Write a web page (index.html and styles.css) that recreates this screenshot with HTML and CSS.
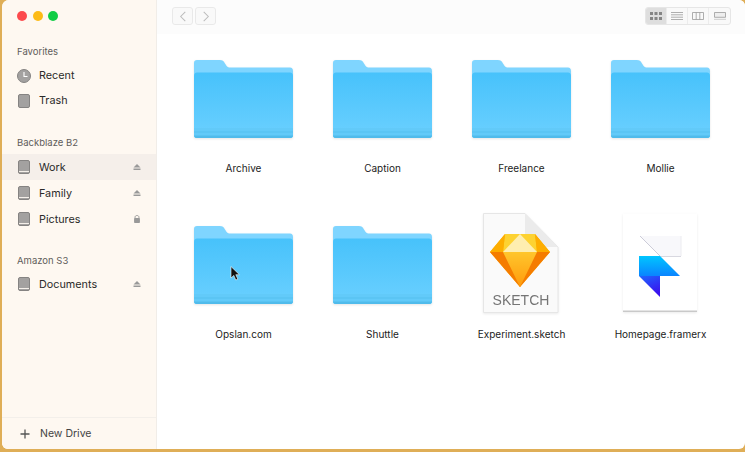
FILE: index.html
```html
<!DOCTYPE html>
<html lang="en">
<head>
  <meta charset="UTF-8">
  <meta name="viewport" content="width=device-width, initial-scale=1.0">
  <title>Drives</title>
  <link rel="stylesheet" href="styles.css">
</head>
<body>
  <!-- Shared icons -->
  <svg class="defs" width="0" height="0">
    <defs>
      <linearGradient id="folder-front" x1="0" y1="0" x2="0" y2="1">
        <stop offset="0" stop-color="#47c2fb"/>
        <stop offset="1" stop-color="#6bd0ff"/>
      </linearGradient>
      <linearGradient id="gem-mid" x1="0" y1="0" x2="0" y2="1">
        <stop offset="0" stop-color="#ffc62c"/>
        <stop offset="1" stop-color="#ff9a0c"/>
      </linearGradient>
      <linearGradient id="fr-top" x1="0" y1="0" x2="0" y2="1">
        <stop offset="0" stop-color="#00c6ff"/>
        <stop offset="1" stop-color="#0a84ff"/>
      </linearGradient>
      <linearGradient id="fr-bottom" x1="0" y1="0" x2="0.4" y2="1">
        <stop offset="0" stop-color="#1f66ff"/>
        <stop offset="1" stop-color="#3a12ee"/>
      </linearGradient>
      <symbol id="folder" viewBox="0 0 100 78" preserveAspectRatio="none">
        <path d="M3 0H26C29 0 30 1 31 3L33 6C34 7 35 7.500 37 7.500H97C99 7.500 100 9 100 11V40H0V3C0 1 1 0 3 0Z" fill="#7fd5ff"/>
        <path d="M3 12.500H97C99 12.500 100 14 100 16V75C100 77 99 78 97 78H3C1 78 0 77 0 75V16C0 14 1 12.500 3 12.500Z" fill="url(#folder-front)"/>
        <path d="M0 68H100V75C100 77 99 78 97 78H3C1 78 0 77 0 75Z" fill="#62caf9"/>
        <path d="M0 71.500H100V72.500H0Z" fill="#55c0f0"/>
        <path d="M0 75.500H100V75C100 77 99 78 97 78H3C1 78 0 77 0 75Z" fill="#50bbeb"/>
      </symbol>
      <symbol id="drive" viewBox="0 0 14 14">
        <rect x="1.500" y="0.500" width="11" height="13" rx="1.500" fill="#a3a1a0" stroke="#858382"/>
        <path d="M2 11H12V12H2Z" fill="#f4efe9"/>
      </symbol>
      <symbol id="eject" viewBox="0 0 8 7">
        <path d="M4 0.500L7.500 4H0.500Z" fill="#999"/>
        <rect x="0.500" y="5" width="7" height="1.500" fill="#999"/>
      </symbol>
    </defs>
  </svg>

  <div class="window">
    <aside class="sidebar">
      <div class="lights">
        <span class="light light-red"></span>
        <span class="light light-yellow"></span>
        <span class="light light-green"></span>
      </div>

      <h2 class="side-title side-title-first">Favorites</h2>
      <ul class="side-list side-list-tight">
        <li class="side-row">
          <svg class="side-icon" viewBox="0 0 14 14">
            <circle cx="7" cy="7" r="6.500" fill="#a3a1a0" stroke="#858382"/>
            <path d="M7 3V7.500H10.500" fill="none" stroke="#fff" stroke-width="1.100"/>
          </svg>
          <span class="side-name">Recent</span>
        </li>
        <li class="side-row">
          <svg class="side-icon" viewBox="0 0 14 14">
            <rect x="1.500" y="0.500" width="11" height="13" rx="1.500" fill="#a3a1a0" stroke="#858382"/>
          </svg>
          <span class="side-name">Trash</span>
        </li>
      </ul>

      <h2 class="side-title">Backblaze B2</h2>
      <ul class="side-list">
        <li class="side-row side-row-active">
          <svg class="side-icon"><use href="#drive"/></svg>
          <span class="side-name">Work</span>
          <svg class="side-state"><use href="#eject"/></svg>
        </li>
        <li class="side-row">
          <svg class="side-icon"><use href="#drive"/></svg>
          <span class="side-name">Family</span>
          <svg class="side-state"><use href="#eject"/></svg>
        </li>
        <li class="side-row">
          <svg class="side-icon"><use href="#drive"/></svg>
          <span class="side-name">Pictures</span>
          <svg class="side-state" viewBox="0.500 0.500 7 8.200">
            <path d="M2 4V2.800C2 0.400 6 0.400 6 2.800V4" fill="none" stroke="#999" stroke-width="1"/>
            <rect x="1" y="3.700" width="6" height="5" rx="0.800" fill="#999"/>
          </svg>
        </li>
      </ul>

      <h2 class="side-title side-title-s3">Amazon S3</h2>
      <ul class="side-list">
        <li class="side-row">
          <svg class="side-icon"><use href="#drive"/></svg>
          <span class="side-name">Documents</span>
          <svg class="side-state"><use href="#eject"/></svg>
        </li>
      </ul>

      <div class="new-drive">
        <svg class="plus" viewBox="0 0 10 10"><path d="M5 0.500V9.500M0.500 5H9.500" stroke="#555" stroke-width="1.300"/></svg>
        <span>New Drive</span>
      </div>
    </aside>

    <main class="content">
      <div class="toolbar">
        <div class="nav">
          <button class="nav-btn">
            <svg viewBox="0 0 8 12"><path d="M6.500 1L1.500 6L6.500 11" fill="none" stroke="#bbb" stroke-width="1.100"/></svg>
          </button>
          <button class="nav-btn">
            <svg viewBox="0 0 8 12"><path d="M1.500 1L6.500 6L1.500 11" fill="none" stroke="#bbb" stroke-width="1.100"/></svg>
          </button>
        </div>
        <div class="views">
          <div class="view view-active">
            <svg viewBox="0 0 12 8"><path d="M0 0h3v3H0zM4.500 0h3v3h-3zM9 0h3v3H9zM0 5h3v3H0zM4.500 5h3v3h-3zM9 5h3v3H9z" fill="#858585"/></svg>
          </div>
          <div class="view">
            <svg viewBox="0 0 12 8"><path d="M0 .5h12M0 2.800h12M0 5.200h12M0 7.500h12" stroke="#9a9a9a" stroke-width="0.800"/></svg>
          </div>
          <div class="view">
            <svg viewBox="0 0 12 8"><path d="M.5.500h11v7H.5zM4.200.500v7M7.800.500v7" fill="none" stroke="#9a9a9a" stroke-width="0.800"/></svg>
          </div>
          <div class="view">
            <svg viewBox="0 0 12 8"><path d="M.5.500h11v4.800H.5z" fill="#eee" stroke="#9a9a9a" stroke-width="0.800"/><path d="M.5 7.300h11" stroke="#9a9a9a" stroke-width="0.900" stroke-dasharray="1 1"/></svg>
          </div>
        </div>
      </div>

      <div class="files">
        <div class="file">
          <svg class="file-folder"><use href="#folder"/></svg>
          <span class="file-name">Archive</span>
        </div>
        <div class="file">
          <svg class="file-folder"><use href="#folder"/></svg>
          <span class="file-name">Caption</span>
        </div>
        <div class="file">
          <svg class="file-folder"><use href="#folder"/></svg>
          <span class="file-name">Freelance</span>
        </div>
        <div class="file">
          <svg class="file-folder"><use href="#folder"/></svg>
          <span class="file-name">Mollie</span>
        </div>
        <div class="file">
          <svg class="file-folder"><use href="#folder"/></svg>
          <span class="file-name">Opslan.com</span>
        </div>
        <div class="file">
          <svg class="file-folder"><use href="#folder"/></svg>
          <span class="file-name">Shuttle</span>
        </div>
        <div class="file">
          <svg class="file-doc file-doc-sketch" viewBox="0 0 76 100">
            <path d="M0.500 0.500H42L75 34V99.500H0.500Z" fill="#fafafa" stroke="#e6e6e6"/>
            <path d="M42 0.500L75 34H52C46 34 42 31 42 26Z" fill="#ebebeb"/>
            <path d="M22 21H52L67 39L37 74L7 39Z" fill="#fdb300"/>
            <path d="M7 39H67L37 74Z" fill="#f57c00"/>
            <path d="M20 39H54L37 74Z" fill="url(#gem-mid)"/>
            <path d="M22 21L20 39H54L52 21Z" fill="#fdd231"/>
            <path d="M37 21L20 39H54Z" fill="#feeeb0"/>
            <path d="M22 21L7 39H20Z" fill="#fdad00"/>
            <path d="M52 21L67 39H54Z" fill="#fdad00"/>
            <text class="doc-label" x="38" y="92" text-anchor="middle">SKETCH</text>
          </svg>
          <span class="file-name">Experiment.sketch</span>
        </div>
        <div class="file">
          <svg class="file-doc" viewBox="0 0 76 100">
            <rect x="0" y="0.500" width="74" height="98" fill="#fff"/>
            <rect x="0" y="97.500" width="74" height="1.500" fill="#c9c9c9"/>
            <path d="M17 23H58V43H37Z" fill="#f8f8fb"/>
            <path d="M37 43H58V44H37Z" fill="#d8d8e0"/>
            <path d="M58 23V43" stroke="#ececf0"/>
            <path d="M17 23L37 43" stroke="#ccccd8" stroke-width="1"/>
            <path d="M16 43H37L57 63H16Z" fill="url(#fr-top)"/>
            <path d="M16 63H37V84Z" fill="url(#fr-bottom)"/>
          </svg>
          <span class="file-name">Homepage.framerx</span>
        </div>
      </div>

      <svg class="pointer" viewBox="0 0 10 15">
        <path d="M1 0.500V12L3.800 9.400L5.800 14L7.800 13.100L5.800 8.700H9.400Z" fill="#111" stroke="#fff" stroke-width="0.600"/>
      </svg>
    </main>
  </div>
</body>
</html>
```
FILE: styles.css
```css
* {
  box-sizing: border-box;
}
html, body {
  height: 100%;
}
body {
  margin: 0;
  overflow: hidden;
  background-color: #dfae57;
  font-family: "Inter", "Liberation Sans", sans-serif;
  color: #222;
}
.defs {
  position: absolute;
}
.window {
  display: flex;
  height: 449px;
  margin-left: 2px;
  background-color: #fff;
  border-radius: 7px 6px 6px 6px;
  overflow: hidden;
}

/* Sidebar */
.sidebar {
  display: flex;
  flex-direction: column;
  flex: 0 0 155px;
  background-color: #fef8f1;
  border-right: 1px solid #f1ede8;
}
.lights {
  display: flex;
  gap: 5.500px;
  padding: 11px 0 0 15px;
}
.light {
  width: 10px;
  height: 10px;
  border-radius: 50%;
}
.light-red {
  background-color: #fc4a4d;
}
.light-yellow {
  background-color: #fdbb16;
}
.light-green {
  background-color: #11cd45;
}
.side-title {
  margin: 0;
  padding-left: 15px;
  height: 14px;
  line-height: 14px;
  font-size: 9.500px;
  font-weight: 400;
  color: #5f5d5b;
  margin-top: 23px;
  margin-bottom: 4px;
}
.side-title-first {
  margin-top: 24px;
  margin-bottom: 4px;
}
.side-title-s3 {
  margin-top: 22px;
  margin-bottom: 3px;
}
.side-list {
  list-style: none;
  margin: 0;
  padding: 0;
}
.side-row {
  display: flex;
  align-items: center;
  height: 26px;
  padding-left: 15px;
  font-size: 10.800px;
  color: #2b2a29;
}
.side-list-tight .side-row {
  height: 25px;
}
.side-row-active {
  background-color: #f5efea;
}
.side-icon {
  flex: 0 0 14px;
  width: 14px;
  height: 14px;
}
.side-name {
  flex: 1;
  margin-left: 8px;
}
.side-state {
  flex: 0 0 8px;
  width: 8px;
  height: 8px;
  margin-right: 15px;
}
.new-drive {
  display: flex;
  align-items: center;
  margin-top: auto;
  height: 32px;
  padding-left: 18px;
  border-top: 1px solid #f3efea;
  font-size: 10.500px;
  color: #444;
}
.plus {
  width: 10px;
  height: 10px;
  margin-right: 10px;
}

/* Main pane */
.content {
  position: relative;
  flex: 1;
}
.toolbar {
  display: flex;
  justify-content: space-between;
  align-items: center;
  height: 34px;
  padding: 0 14px 2px 15px;
  background-color: #fcfcfc;
}
.nav {
  display: flex;
  gap: 2px;
}
.nav-btn {
  display: flex;
  align-items: center;
  justify-content: center;
  width: 21px;
  height: 18px;
  padding: 0;
  background-color: #f9f9f9;
  border: 1px solid #e9e9e9;
  border-radius: 3px;
}
.nav-btn svg {
  width: 8px;
  height: 11px;
}
.views {
  display: flex;
  height: 18px;
  background-color: #f9f9f9;
  border: 1px solid #e6e6e6;
  border-radius: 3px;
  overflow: hidden;
}
.view {
  display: flex;
  align-items: center;
  justify-content: center;
  width: 21px;
  border-right: 1px solid #ececec;
}
.view:last-child {
  border-right: none;
}
.view svg {
  width: 12px;
  height: 8px;
}
.view-active {
  background-color: #dedede;
}

/* File grid */
.files {
  display: grid;
  grid-template-columns: repeat(4, 139px);
  grid-auto-rows: 166px;
  padding: 26px 0 0 17px;
}
.file {
  display: flex;
  flex-direction: column;
  align-items: center;
}
.file-folder {
  width: 99px;
  height: 78px;
  margin-bottom: 23px;
  filter: drop-shadow(0 1px 1px rgba(0, 0, 0, 0.1));
}
.file-doc {
  width: 76px;
  height: 100px;
  margin-top: -13px;
  margin-bottom: 14px;
  filter: drop-shadow(0 1px 1px rgba(0, 0, 0, 0.08));
}
.file-doc-sketch {
  margin-left: -2px;
}
.doc-label {
  font-family: "Liberation Sans", sans-serif;
  font-size: 14px;
  fill: #757575;
}
.file-name {
  height: 14px;
  line-height: 14px;
  font-size: 10px;
  color: #1c1c1c;
}
.pointer {
  position: absolute;
  left: 73px;
  top: 266px;
  width: 10px;
  height: 15px;
}
```
